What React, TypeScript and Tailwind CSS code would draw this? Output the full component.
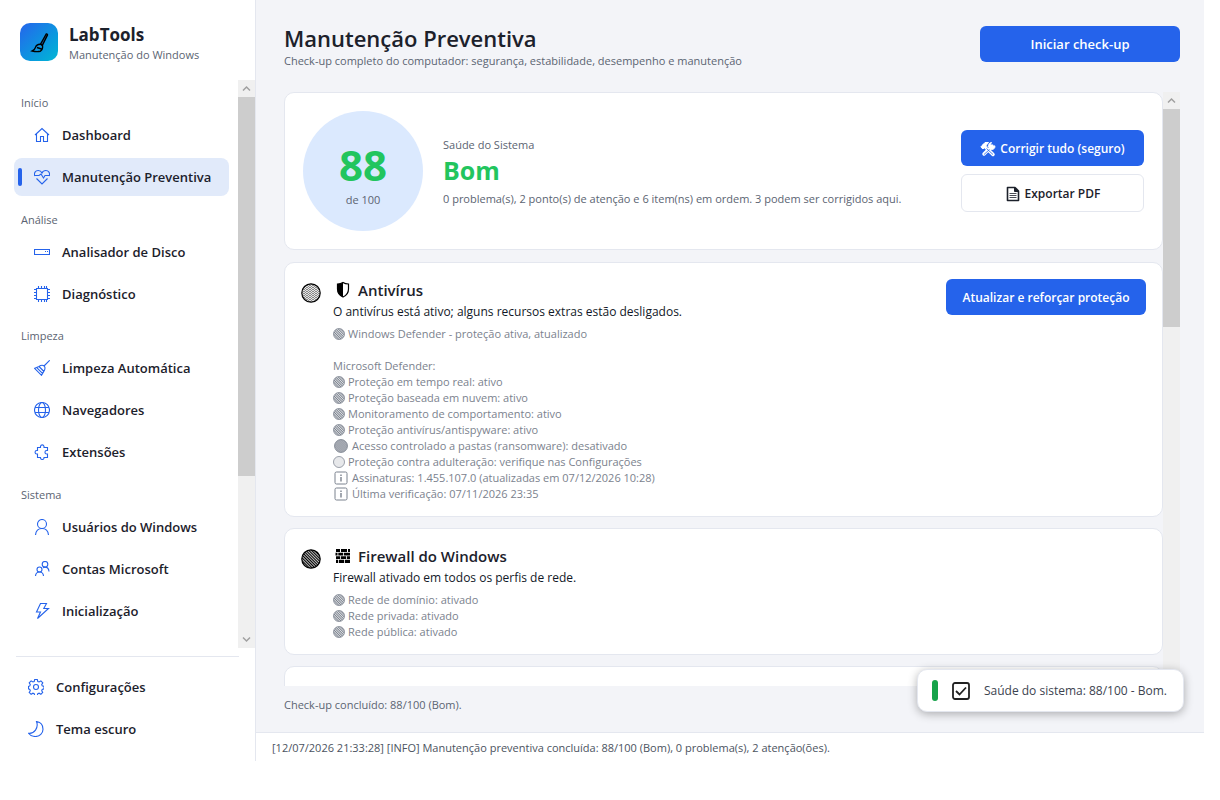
import React from "react";
import clsx from "clsx";

type IconName =
  | "home"
  | "heart"
  | "disk"
  | "chip"
  | "broom"
  | "globe"
  | "puzzle"
  | "user"
  | "users"
  | "bolt"
  | "battery"
  | "gear"
  | "moon";

interface NavItem {
  label: string;
  icon: IconName;
}

interface NavGroup {
  title: string;
  items: NavItem[];
}

const NAV: NavGroup[] = [
  {
    title: "Início",
    items: [
      { label: "Dashboard", icon: "home" },
      { label: "Manutenção Preventiva", icon: "heart" },
    ],
  },
  {
    title: "Análise",
    items: [
      { label: "Analisador de Disco", icon: "disk" },
      { label: "Diagnóstico", icon: "chip" },
    ],
  },
  {
    title: "Limpeza",
    items: [
      { label: "Limpeza Automática", icon: "broom" },
      { label: "Navegadores", icon: "globe" },
      { label: "Extensões", icon: "puzzle" },
    ],
  },
  {
    title: "Sistema",
    items: [
      { label: "Usuários do Windows", icon: "user" },
      { label: "Contas Microsoft", icon: "users" },
      { label: "Inicialização", icon: "bolt" },
      { label: "Energia", icon: "battery" },
    ],
  },
];

const FOOTER_NAV: NavItem[] = [
  { label: "Configurações", icon: "gear" },
  { label: "Tema escuro", icon: "moon" },
];

type Tone = "ok" | "warn" | "off" | "info";

interface Detail {
  text: string;
  tone?: Tone;
}

const ANTIVIRUS: Detail[] = [
  { text: "Windows Defender - proteção ativa, atualizado", tone: "ok" },
  { text: "" },
  { text: "Microsoft Defender:" },
  { text: "Proteção em tempo real: ativo", tone: "ok" },
  { text: "Proteção baseada em nuvem: ativo", tone: "ok" },
  { text: "Monitoramento de comportamento: ativo", tone: "ok" },
  { text: "Proteção antivírus/antispyware: ativo", tone: "ok" },
  { text: "Acesso controlado a pastas (ransomware): desativado", tone: "off" },
  { text: "Proteção contra adulteração: verifique nas Configurações", tone: "warn" },
  { text: "Assinaturas: 1.455.107.0 (atualizadas em 07/12/2026 10:28)", tone: "info" },
  { text: "Última verificação: 07/11/2026 23:35", tone: "info" },
];

const FIREWALL: Detail[] = [
  { text: "Rede de domínio: ativado", tone: "ok" },
  { text: "Rede privada: ativado", tone: "ok" },
  { text: "Rede pública: ativado", tone: "ok" },
];

const ICON_PATHS: Record<IconName, React.ReactNode> = {
  home: <path d="M1 8 8 1.5 15 8M2.5 7v7.5h4v-5h3v5h4V7" />,
  heart: (
    <>
      <path d="M.8 7C-.3 4 1.4 1.5 4.2 1.5 6 1.5 7.3 2.4 8 4c.7-1.6 2-2.5 3.8-2.5 2.8 0 4.5 2.5 3.4 5.500" />
      <path d="M.8 6.500H5l2-1.500 2.500 4L11 6.500h4.200M2.500 9.500l5.500 5.500 5.500-5.500" />
    </>
  ),
  disk: <path d="M.5 5.5h15v5H.5zM11 7.5h1M13 7.5h1" />,
  chip: (
    <path d="M2.5 2.5h11v11h-11zM4.5 0v2.5M7.5 0v2.5M10.5 0v2.5M12.5 0v2.5M4.5 13.5V16M7.5 13.5V16M10.5 13.5V16M12.5 13.5V16M0 3.5h2.5M0 6.5h2.5M0 9.5h2.5M0 12.5h2.5M13.5 3.5H16M13.5 6.5H16M13.5 9.5H16M13.5 12.5H16" />
  ),
  broom: (
    <path d="M15.7.3 10 6M5 6.5c2-1.500 4-1.500 5.2-.3s1 3-.4 5.2L7.5 15.3.6 8.3zM5 6.500l5 5M3 7.8l5.500 5.600" />
  ),
  globe: (
    <>
      <circle cx="8" cy="8" r="7.5" />
      <ellipse cx="8" cy="8" rx="3.5" ry="7.5" />
      <path d="M1 5.5h14M1 10.5h14" />
    </>
  ),
  puzzle: (
    <path d="M3.5 3.5h3V2.3a1.8 1.8 0 0 1 3.5 0v1.2h3.5v3h-.8a1.7 1.7 0 0 0 0 3.5h.8v3.5H10v.6a1.8 1.8 0 0 1-3.5 0v-.6h-3V10h-.7a1.7 1.7 0 0 1 0-3.5h.7z" />
  ),
  user: (
    <>
      <circle cx="8" cy="5" r="4.5" />
      <path d="M1.5 16c.4-4 3-6.5 6.5-6.5s6.1 2.5 6.5 6.5" />
    </>
  ),
  users: (
    <>
      <circle cx="5.5" cy="8.5" r="2.5" />
      <circle cx="11" cy="3.3" r="2.8" />
      <path d="M1.5 15c.2-2.5 1.8-4 4-4s3.8 1.500 4 4M9 6.8c.6-.5 1.2-.7 2-.7 2.200 0 3.800 1.600 4 4.400" />
    </>
  ),
  bolt: <path d="M6.5.5h6L9.8 5.5h4.7L3.500 15.500l3-6.500h-4z" />,
  battery: <path d="M1 4.5h12v7H1zM15 7v2" />,
  gear: (
    <>
      <path d="M6.700.5h2.600l.5 2 1.300.5 1.800-1.100 1.900 1.900-1.100 1.800.5 1.300 1.800.5v2.400l-1.800.6-.5 1.300 1 1.700-1.800 1.900-1.800-1.100-1.300.5-.5 1.800H6.700l-.5-1.800-1.300-.5-1.800 1.100-1.900-1.900 1.100-1.700-.5-1.300-1.300-.6V7.400l1.300-.5.5-1.300-1.100-1.800 1.900-1.900L4.900 3l1.300-.5z" />
      <circle cx="8" cy="8" r="2.5" />
    </>
  ),
  moon: <path d="M8.5.5c4 .6 6.5 3.6 6.5 7.8 0 4.2-3.3 7.2-7.5 7.2-3 0-5.5-1-7-3.2 5.5.7 10.5-5.3 8-11.8z" />,
};

function Icon({ name }: { name: IconName }) {
  return (
    <svg viewBox="0 0 16 16" className="size-4 shrink-0 text-[#2563eb]" fill="none" stroke="currentColor" strokeWidth="1.1" aria-hidden="true">
      {ICON_PATHS[name]}
    </svg>
  );
}

function NavButton({ item, active }: { item: NavItem; active?: boolean }) {
  return (
    <button
      type="button"
      aria-current={active ? "page" : undefined}
      className={clsx(
        "flex h-[38px] w-full shrink-0 items-center rounded-lg pl-1 text-left text-[13px] leading-5 font-semibold whitespace-nowrap text-[#1c212b]",
        active ? "bg-[#e1eafa]" : "hover:bg-gray-100"
      )}
    >
      <span className={clsx("mr-3 h-[18px] w-1 rounded-sm", active && "bg-[#2563eb]")} />
      <Icon name={item.icon} />
      <span className="ml-3">{item.label}</span>
    </button>
  );
}

function Scrollbar({ thumb }: { thumb: string }) {
  const arrow = "m5 10.5 3.5-3.5 3.5 3.5";
  return (
    <div className="flex w-[17px] shrink-0 flex-col bg-[#f0f0f0]" aria-hidden="true">
      <svg viewBox="0 0 17 17" className="size-[17px] shrink-0" fill="none" stroke="#a0a0a0" strokeWidth="1.5">
        <path d={arrow} />
      </svg>
      <div className="min-h-0 flex-1">
        <div className={clsx("bg-[#cdcdcd]", thumb)} />
      </div>
      <svg viewBox="0 0 17 17" className="size-[17px] shrink-0 rotate-180" fill="none" stroke="#a0a0a0" strokeWidth="1.5">
        <path d={arrow} />
      </svg>
    </div>
  );
}

function Sidebar() {
  return (
    <aside className="flex w-64 shrink-0 flex-col border-r border-[#e4e7ef] bg-white">
      <div className="flex h-20 shrink-0 items-center gap-[11px] pl-5">
        <div className="mt-1 flex size-[38px] items-center justify-center rounded-[10px] bg-linear-to-br from-[#2563eb] to-[#06b6d4]">
          <svg viewBox="0 0 20 20" className="mt-[2px] ml-[2px] size-5" fill="none" stroke="#000" strokeWidth="1.4" aria-hidden="true">
            <path d="M16.2 1c.9-.3 1.500.3 1.200 1.100l-5 10.200-1.900-1.100z" fill="#1c5f9e" />
            <path d="M10.400 11.200c-2.500-.1-4.200.8-4.900 3.200-.5 1.600-1.500 2.700-3.300 3.600 3 .7 6.300.7 8.200.2 1.700-1 2.600-3.200 2-6zM7 14.500l4.500 1.500" />
          </svg>
        </div>
        <div className="mt-2">
          <h2 className="text-[17px] leading-[22px] font-bold text-[#1c212b]">LabTools</h2>
          <p className="text-[11px] leading-[18px] text-[#5b6472]">Manutenção do Windows</p>
        </div>
      </div>

      <div className="flex min-h-0 flex-1">
        <nav className="min-w-0 flex-1 overflow-hidden pr-[9px] pl-[14px]">
          {NAV.map((group, i) => (
            <section key={group.title}>
              <h3 className={clsx("mb-[5px] pl-[7px] text-[11px] leading-4 font-medium text-[#5b6472]", i % 2 === 0 ? "pt-[15px]" : "pt-4")}>
                {group.title}
              </h3>
              <div className="flex flex-col gap-1">
                {group.items.map((item) => (
                  <NavButton key={item.label} item={item} active={item.icon === "heart"} />
                ))}
              </div>
            </section>
          ))}
        </nav>
        <Scrollbar thumb="h-[71%]" />
      </div>

      <div className="mt-2 mr-4 ml-4 border-t border-[#e4e7ef]" />
      <div className="mt-[11px] mb-[13px] flex flex-col gap-1 pr-[9px] pl-2">
        {FOOTER_NAV.map((item) => (
          <NavButton key={item.label} item={item} />
        ))}
      </div>
    </aside>
  );
}

// Hatched disc used for every status marker
function StatusDot({ tone, className }: { tone: "ok" | "warn" | "off"; className?: string }) {
  const id = React.useId();
  return (
    <svg viewBox="0 0 20 20" className={clsx("shrink-0", className)} aria-hidden="true">
      <defs>
        {tone === "warn" ? (
          <pattern id={id} width="3" height="2" patternUnits="userSpaceOnUse">
            <path d="M0 .4 1.5 1.4 3 .4" fill="none" stroke="currentColor" strokeWidth=".6" />
          </pattern>
        ) : (
          <pattern id={id} width="2" height="2" patternUnits="userSpaceOnUse" patternTransform="rotate(-45)">
            <path d="M.6 0v2" stroke="currentColor" strokeWidth={tone === "off" ? 1.6 : 1.3} />
          </pattern>
        )}
      </defs>
      <circle cx="10" cy="10" r="9.2" fill={`url(#${id})`} stroke="currentColor" strokeWidth="1.2" />
    </svg>
  );
}

function DetailLine({ detail }: { detail: Detail }) {
  return (
    <li className="flex h-4 items-center">
      {detail.tone === "info" && (
        <svg viewBox="0 0 14 14" className="mr-1 ml-px size-[14px] shrink-0" fill="none" stroke="currentColor" aria-hidden="true">
          <rect x="1" y="1" width="12" height="12" rx="1.5" />
          <path d="M7 3.5V5M7 6v4.5" strokeWidth="1.4" />
        </svg>
      )}
      {detail.tone && detail.tone !== "info" && (
        <StatusDot tone={detail.tone} className={detail.tone === "off" ? "mr-1 ml-px size-[14px]" : "mr-[3px] size-3"} />
      )}
      {detail.text}
    </li>
  );
}

interface CheckCardProps {
  title: string;
  summary: string;
  tone: "ok" | "warn";
  glyph: React.ReactNode;
  details: Detail[];
  action?: string;
}

function CheckCard({ title, summary, tone, glyph, details, action }: CheckCardProps) {
  return (
    <article className="flex shrink-0 items-start rounded-[10px] border border-[#e4e7ef] bg-white px-4 pt-4 pb-[14px]">
      <StatusDot tone={tone} className="mt-1 size-5 text-black" />
      <div className="ml-3 min-w-0 flex-1">
        <h3 className="flex h-[22px] items-center text-[15px] font-semibold text-[#1c212b]">
          <span className="mr-[6px] ml-px">{glyph}</span>
          {title}
        </h3>
        <p className="mt-px text-[12px] leading-5 text-[#111827]">{summary}</p>
        <ul className="mt-1 text-[11px] leading-4 text-[#7b828e]">
          {details.map((detail, i) => (
            <DetailLine key={i} detail={detail} />
          ))}
        </ul>
      </div>
      {action && (
        <button type="button" className="h-9 w-[200px] shrink-0 rounded-md bg-[#2563eb] pt-px text-[12px] font-semibold whitespace-nowrap text-white">
          {action}
        </button>
      )}
    </article>
  );
}

const shieldGlyph = (
  <svg viewBox="0 0 18 18" className="size-[18px]" aria-hidden="true">
    <path d="M9 1.5c1.500 1 3.500 1.500 5.500 1.500v5c0 3.800-2 6.500-5.500 8-3.500-1.500-5.500-4.200-5.500-8V3c2 0 4-.5 5.500-1.500z" fill="none" stroke="#000" strokeWidth="1.2" />
    <path d="M9 1.5V16C5.500 14.500 3.500 11.800 3.500 8V3c2 0 4-.5 5.500-1.500z" />
  </svg>
);

const bricksGlyph = (
  <svg viewBox="0 0 18 18" className="size-[18px]" aria-hidden="true">
    <path d="M2 2h4v3H2zM7 2h6v3H7zM14 2h2v3h-2zM1.5 5.7h2v2.8h-2zM4.3 5.7H9v2.8H4.3zM9.8 5.7H16v2.8H9.8zM2 9.2h4V12H2zM6.8 9.2H12V12H6.8zM12.8 9.2H16V12h-3.2zM2 12.7h2V16H2zM4.8 12.7H10V16H4.8zM10.8 12.7H16V16h-5.2z" />
  </svg>
);

function HealthCard() {
  return (
    <section className="mb-px flex shrink-0 items-center rounded-[10px] border border-[#e4e7ef] bg-white px-[18px] py-[18px]">
      <div className="flex size-[120px] shrink-0 flex-col items-center rounded-full bg-[#dbe9fe] pt-[30px]">
        <span className="text-[42px] leading-[48px] font-bold text-[#22c55e]">88</span>
        <span className="mt-[3px] text-[11px] leading-4 text-[#5b6472]">de 100</span>
      </div>
      <div className="ml-5 min-w-0 flex-1 pt-[2px] text-[11px] leading-4 text-[#5b6472]">
        <p>Saúde do Sistema</p>
        <p className="mt-[2px] mb-[6px] text-[25px] leading-[30px] font-bold text-[#22c55e]">Bom</p>
        <p>0 problema(s), 2 ponto(s) de atenção e 6 item(ns) em ordem. 3 podem ser corrigidos aqui.</p>
      </div>
      <div className="flex w-[183px] shrink-0 flex-col gap-2 text-[12px] font-semibold">
        <button type="button" className="flex h-9 items-center justify-center gap-1 rounded-md bg-[#2563eb] pt-[2px] whitespace-nowrap text-white">
          <svg viewBox="0 0 16 16" className="size-4 shrink-0" fill="none" stroke="currentColor" aria-hidden="true">
            <path d="M4 4.5l9 9M12 5 4 13" strokeWidth="3.5" strokeLinecap="round" />
            <path d="M.8 6 5 1.5h3.5L6 4.5 3 8z" fill="currentColor" />
            <path d="M11.5 1.5 10 4l2 2 2.800-1.200c.6 2-.8 3.700-3.300 3.700C9 8 8 6.500 8.500 4.500 9 2.500 10 1.500 11.500 1.500z" fill="currentColor" />
            <path d="m6.5 7.5 6.5 6M9.5 8.5l-5.5 5M7 5.5 8.5 7" stroke="#2563eb" strokeWidth=".8" />
          </svg>
          Corrigir tudo (seguro)
        </button>
        <button type="button" className="flex h-[38px] items-center justify-center gap-1 rounded-md border border-[#e4e7ef] bg-white pt-px whitespace-nowrap text-[#1c212b]">
          <svg viewBox="0 0 16 16" className="size-4 shrink-0" fill="none" stroke="currentColor" aria-hidden="true">
            <path d="M2.5 1.5h7.5l3.5 3.5v9.5h-11z" strokeWidth="1.6" strokeLinejoin="round" />
            <path d="M9.5 1.5v4h4z" fill="currentColor" />
            <path d="M4.5 7.5h7M4.5 9.5h7M4.5 11.5h7" strokeWidth=".8" />
          </svg>
          Exportar PDF
        </button>
      </div>
    </section>
  );
}

function Toast() {
  return (
    <div role="status" className="absolute right-5 bottom-[49px] flex h-[43px] items-center rounded-[10px] border border-[#e4e7ef] bg-white pr-4 pl-[14px] text-[12px] whitespace-nowrap text-[#3c4350] shadow-[0_2px_10px_rgba(0,0,0,0.3)]">
      <span className="h-[21px] w-[6px] rounded-full bg-[#16a34a]" />
      <svg viewBox="0 0 18 18" className="mr-[14px] ml-[14px] size-[18px]" fill="none" stroke="#222" strokeWidth="1.8" aria-hidden="true">
        <rect x="1" y="1" width="16" height="16" rx="2" />
        <path d="m4 9 3.5 3.5 6.5-7" />
      </svg>
      Saúde do sistema: 88/100 - Bom.
    </div>
  );
}

export default function App() {
  return (
    <div className="h-screen bg-white pr-4 pb-[39px] font-['Open_Sans',sans-serif]">
      <div className="relative flex h-full">
        <Sidebar />
        <div className="flex min-w-0 flex-1 flex-col bg-[#f3f4f8]">
          <header className="flex h-[92px] shrink-0 items-start justify-between pr-6 pl-7">
            <div className="pt-[22px]">
              <h1 className="text-[22px] leading-8 font-semibold text-[#1c212b]">Manutenção Preventiva</h1>
              <p className="text-[11px] leading-[14px] text-[#5b6472]">
                Check-up completo do computador: segurança, estabilidade, desempenho e manutenção
              </p>
            </div>
            <button type="button" className="mt-[26px] h-9 w-[200px] rounded-md bg-[#2563eb] pt-[2px] text-[13px] font-semibold text-white">
              Iniciar check-up
            </button>
          </header>

          <main className="flex min-h-0 flex-1 pr-6 pl-7">
            <div className="flex min-w-0 flex-1 flex-col gap-[11px] overflow-hidden">
              <HealthCard />
              <CheckCard
                title="Antivírus"
                summary="O antivírus está ativo; alguns recursos extras estão desligados."
                tone="warn"
                glyph={shieldGlyph}
                details={ANTIVIRUS}
                action="Atualizar e reforçar proteção"
              />
              <CheckCard
                title="Firewall do Windows"
                summary="Firewall ativado em todos os perfis de rede."
                tone="ok"
                glyph={bricksGlyph}
                details={FIREWALL}
              />
              <div className="h-32 shrink-0 rounded-[10px] border border-[#e4e7ef] bg-white" />
            </div>
            <Scrollbar thumb="h-[39%]" />
          </main>

          <p className="h-[46px] shrink-0 pt-[11px] pl-7 text-[11px] leading-4 text-[#5b6472]">Check-up concluído: 88/100 (Bom).</p>
          <footer className="h-[29px] shrink-0 border-t border-[#e4e7ef] bg-white pt-[7px] pl-4 text-[11px] leading-4 text-[#4b5360]">
            [12/07/2026 21:33:28] [INFO] Manutenção preventiva concluída: 88/100 (Bom), 0 problema(s), 2 atenção(ões).
          </footer>
        </div>
        <Toast />
      </div>
    </div>
  );
}
